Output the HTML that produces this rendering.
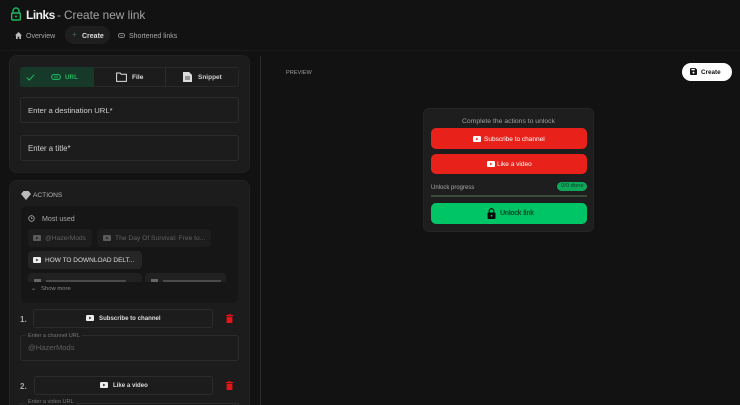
<!DOCTYPE html>
<html><head><meta charset="utf-8">
<style>
html,body{margin:0;padding:0;background:#121212;width:740px;height:405px;overflow:hidden}
body{font-family:"Liberation Sans",sans-serif;color:#ddd}
#w{position:absolute;left:0;top:0;width:740px;height:405px;overflow:hidden;background:#121212}
.a{position:absolute;box-sizing:border-box}
.t{position:absolute;white-space:nowrap;line-height:1;margin-top:1.5px}
svg{position:absolute;display:block}
.card{background:#1c1c1c;border:1px solid #222;border-radius:8px}
.inp{border:1px solid #2c2c2c;border-radius:3px}
.chip{position:absolute;height:18px;border-radius:4px;background:#212121}
</style></head><body><div id="w">
<!-- header -->
<svg style="left:10px;top:7px" width="12" height="14" viewBox="0 0 12 14"><path d="M3 6V4a3 3 0 0 1 6 0v2" fill="none" stroke="#1fb860" stroke-width="1.4"/><rect x="1.7" y="6" width="8.6" height="7" rx="1" fill="none" stroke="#1fb860" stroke-width="1.4"/><circle cx="6" cy="9.5" r="1" fill="#1fb860"/></svg>
<div class="t" style="left:26px;top:7.5px;font-size:12px;font-weight:bold;color:#eee;letter-spacing:-.5px">Links</div>
<div class="t" style="left:57px;top:8px;font-size:11.8px;color:#a3a3a3">-</div>
<div class="t" style="left:64px;top:8px;font-size:11.8px;color:#a3a3a3">Create new link</div>
<svg style="left:15px;top:32px" width="7" height="7" viewBox="0 0 7 7"><path d="M3.5 0L7 3.4H6V7H4.3V4.8H2.7V7H1V3.4H0z" fill="#bbb"/></svg>
<div class="t" style="left:26px;top:31px;font-size:7px;color:#a8a8a8">Overview</div>
<div class="a" style="left:65px;top:26px;width:45px;height:18px;border-radius:9px;background:#1e1e1e"></div>
<div class="t" style="left:72px;top:29px;font-size:8px;color:#476b57">+</div>
<div class="t" style="left:82px;top:31px;font-size:7px;font-weight:bold;color:#ddd">Create</div>
<svg style="left:118px;top:33px" width="7" height="5" viewBox="0 0 7 5"><rect x=".5" y=".5" width="6" height="4" rx="2" fill="none" stroke="#aaa" stroke-width=".8"/><path d="M2.5 2.5h2" stroke="#aaa" stroke-width=".7"/></svg>
<div class="t" style="left:129px;top:31px;font-size:7px;color:#a8a8a8">Shortened links</div>
<div class="a" style="left:0;top:50px;width:740px;height:1px;background:#191919"></div>
<div class="a" style="left:260px;top:56px;width:1px;height:349px;background:#2a2a2a"></div>

<!-- card 1 -->
<div class="a card" style="left:9px;top:55px;width:241px;height:118px"></div>
<div class="a" style="left:20px;top:67px;width:219px;height:20px;border:1px solid #282828;border-radius:3px"></div>
<div class="a" style="left:20px;top:67px;width:74px;height:20px;background:#17392a;border-radius:3px 0 0 3px"></div>
<div class="a" style="left:165px;top:67px;width:1px;height:20px;background:#2c2c2c"></div>
<svg style="left:26px;top:74px" width="9" height="7" viewBox="0 0 9 7"><path d="M.8 3.6L3.2 6 8.2.8" fill="none" stroke="#1fb860" stroke-width="1"/></svg>
<svg style="left:51px;top:74px" width="10" height="6" viewBox="0 0 10 6"><rect x=".6" y=".6" width="8.8" height="4.8" rx="2.4" fill="none" stroke="#1fb860" stroke-width="1.1"/><path d="M3 3h4" stroke="#1fb860" stroke-width="1"/></svg>
<div class="t" style="left:65px;top:73px;font-size:6.3px;font-weight:bold;color:#1fb860">URL</div>
<svg style="left:116px;top:72px" width="11" height="10" viewBox="0 0 11 10"><path d="M.6 1h3.5l1 1.2h5.3v7.2H.6z" fill="none" stroke="#e0e0e0" stroke-width="1"/></svg>
<div class="t" style="left:132px;top:73px;font-size:6.6px;font-weight:bold;color:#ddd">File</div>
<svg style="left:183px;top:72px" width="9" height="10" viewBox="0 0 9 10"><path d="M0 0h6l3 3v7H0z" fill="#ddd"/><path d="M2 5h5M2 7h5" stroke="#1c1c1c" stroke-width=".8"/></svg>
<div class="t" style="left:198px;top:73px;font-size:6.5px;font-weight:bold;color:#ccc">Snippet</div>
<div class="a inp" style="left:20px;top:97px;width:219px;height:26px"></div>
<div class="t" style="left:28px;top:105.5px;font-size:7.7px;color:#d0d0d0">Enter a destination URL*</div>
<div class="a inp" style="left:20px;top:135px;width:219px;height:26px"></div>
<div class="t" style="left:28px;top:143.5px;font-size:7.8px;color:#d0d0d0">Enter a title*</div>

<!-- card 2 -->
<div class="a card" style="left:9px;top:180px;width:241px;height:225px;border-bottom:0;border-radius:8px 8px 0 0"></div>
<svg style="left:21px;top:191px" width="10" height="9" viewBox="0 0 10 9"><path d="M2.5 0h5L10 3 5 9 0 3z" fill="#bbb"/></svg>
<div class="t" style="left:33px;top:191px;font-size:6.6px;color:#b4b4b4">ACTIONS</div>
<div class="a" style="left:21px;top:206px;width:217px;height:97px;background:#161616;border-radius:6px"></div>
<svg style="left:28px;top:215px" width="7" height="7" viewBox="0 0 7 7"><circle cx="3.5" cy="3.5" r="2.8" fill="none" stroke="#aaa" stroke-width=".8"/><path d="M3.5 2v1.7h1.3" fill="none" stroke="#aaa" stroke-width=".7"/></svg>
<div class="t" style="left:42px;top:214px;font-size:7.1px;color:#a8a8a8">Most used</div>

<div class="chip" style="left:28px;top:229px;width:64px;background:#1d1d1d"></div>
<svg style="left:33px;top:235px" width="8" height="6" viewBox="0 0 8 6"><rect width="8" height="6" rx="1.3" fill="#5c5c5c"/><path d="M3.2 1.6L5.4 3 3.2 4.4z" fill="#1d1d1d"/></svg>
<div class="t" style="left:45px;top:234px;font-size:6.7px;color:#606060">@HazerMods</div>
<div class="chip" style="left:97px;top:229px;width:114px;background:#1d1d1d"></div>
<svg style="left:103px;top:235px" width="8" height="6" viewBox="0 0 8 6"><rect width="8" height="6" rx="1.3" fill="#5c5c5c"/><path d="M3.2 1.6L5.4 3 3.2 4.4z" fill="#1d1d1d"/></svg>
<div class="t" style="left:115px;top:234px;font-size:6.7px;color:#606060">The Day Of Survival: Free to...</div>
<div class="chip" style="left:28px;top:251px;width:114px;background:#262626"></div>
<svg style="left:33px;top:257px" width="8" height="6" viewBox="0 0 8 6"><rect width="8" height="6" rx="1.3" fill="#eee"/><path d="M3.2 1.6L5.4 3 3.2 4.4z" fill="#262626"/></svg>
<div class="t" style="left:45px;top:256px;font-size:6.5px;color:#ddd">HOW TO DOWNLOAD DELT...</div>
<div class="a" style="left:28px;top:273px;width:114px;height:9px;background:#212121;border-radius:4px 4px 0 0"></div>
<div class="a" style="left:145px;top:273px;width:81px;height:9px;background:#212121;border-radius:4px 4px 0 0"></div>
<div class="a" style="left:34px;top:279px;width:7px;height:3px;background:#666"></div>
<div class="a" style="left:151px;top:279px;width:7px;height:3px;background:#666"></div>
<div class="a" style="left:46px;top:280px;width:80px;height:2px;background:#4a4a4a"></div>
<div class="a" style="left:163px;top:280px;width:58px;height:2px;background:#4a4a4a"></div>
<div class="t" style="left:31px;top:284px;font-size:6px;color:#999">⌄</div>
<div class="t" style="left:41px;top:285px;font-size:5.9px;color:#888">Show more</div>

<div class="t" style="left:20px;top:314px;font-size:8px;font-weight:bold;color:#aaa">1.</div>
<div class="a inp" style="left:33px;top:309px;width:180px;height:19px"></div>
<svg style="left:86px;top:315px" width="8" height="6" viewBox="0 0 8 6"><rect width="8" height="6" rx="1.3" fill="#eee"/><path d="M3.2 1.6L5.4 3 3.2 4.4z" fill="#1c1c1c"/></svg>
<div class="t" style="left:99px;top:314.5px;font-size:6.1px;font-weight:bold;color:#ddd">Subscribe to channel</div>
<svg style="left:226px;top:314px" width="7" height="9" viewBox="0 0 7 9"><path d="M0 1h2.2V.2h2.6V1H7v1H0zM.6 2.6h5.8V9H.6z" fill="#e5141a"/></svg>
<div class="a inp" style="left:20px;top:335px;width:219px;height:26px"></div>
<div class="a" style="left:26px;top:332px;width:56px;height:6px;background:#1c1c1c"></div>
<div class="t" style="left:28px;top:332px;font-size:5.6px;color:#777">Enter a channel URL</div>
<div class="t" style="left:28px;top:342.5px;font-size:7.6px;color:#5f5f5f">@HazerMods</div>

<div class="t" style="left:20px;top:381px;font-size:8px;font-weight:bold;color:#aaa">2.</div>
<div class="a inp" style="left:34px;top:376px;width:179px;height:19px"></div>
<svg style="left:100px;top:382px" width="8" height="6" viewBox="0 0 8 6"><rect width="8" height="6" rx="1.3" fill="#eee"/><path d="M3.2 1.6L5.4 3 3.2 4.4z" fill="#1c1c1c"/></svg>
<div class="t" style="left:113px;top:381.5px;font-size:6.1px;font-weight:bold;color:#ddd">Like a video</div>
<svg style="left:226px;top:381px" width="7" height="9" viewBox="0 0 7 9"><path d="M0 1h2.2V.2h2.6V1H7v1H0zM.6 2.6h5.8V9H.6z" fill="#e5141a"/></svg>
<div class="a" style="left:20px;top:403px;width:219px;height:2px;border:1px solid #2c2c2c;border-bottom:0;border-radius:3px 3px 0 0"></div>
<div class="a" style="left:26px;top:399px;width:50px;height:6px;background:#1c1c1c"></div>
<div class="t" style="left:28px;top:398px;font-size:5.6px;color:#777">Enter a video URL</div>

<!-- right -->
<div class="t" style="left:286px;top:69px;font-size:5.6px;color:#9a9a9a">PREVIEW</div>
<div class="a" style="left:682px;top:63px;width:50px;height:18px;border-radius:9px;background:#fff"></div>
<svg style="left:690px;top:68px" width="7" height="7" viewBox="0 0 7 7"><path d="M0 1a1 1 0 0 1 1-1h4.4L7 1.6V6a1 1 0 0 1-1 1H1a1 1 0 0 1-1-1z" fill="#111"/><rect x="1.4" y=".9" width="3.4" height="1.4" fill="#fff"/><circle cx="3.5" cy="4.6" r="1" fill="#fff"/></svg>
<div class="t" style="left:701px;top:68.5px;font-size:6.3px;font-weight:bold;color:#111">Create</div>

<div class="a" style="left:423px;top:108px;width:171px;height:124px;background:#1e1e1e;border:1px solid #252525;border-radius:6px"></div>
<div class="t" style="left:462px;top:117px;font-size:6.8px;color:#9f9f9f">Complete the actions to unlock</div>
<div class="a" style="left:431px;top:128px;width:156px;height:21px;border-radius:5px;background:#e8221b"></div>
<svg style="left:473px;top:136px" width="8" height="6" viewBox="0 0 8 6"><rect width="8" height="6" rx="1.3" fill="#fff"/><path d="M3.2 1.6L5.4 3 3.2 4.4z" fill="#e8221b"/></svg>
<div class="t" style="left:484px;top:135px;font-size:6.5px;color:#fff">Subscribe to channel</div>
<div class="a" style="left:431px;top:154px;width:156px;height:20px;border-radius:5px;background:#e8221b"></div>
<svg style="left:487px;top:161px" width="8" height="6" viewBox="0 0 8 6"><rect width="8" height="6" rx="1.3" fill="#fff"/><path d="M3.2 1.6L5.4 3 3.2 4.4z" fill="#e8221b"/></svg>
<div class="t" style="left:497px;top:160.5px;font-size:6.5px;color:#fff">Like a video</div>
<div class="t" style="left:431px;top:183px;font-size:6px;color:#a8a8a8">Unlock progress</div>
<div class="a" style="left:557px;top:182px;width:30px;height:9px;border-radius:5px;background:#0fa85a"></div>
<div class="t" style="left:561px;top:182.5px;font-size:5.8px;color:#0b3a22">0/0 done</div>
<div class="a" style="left:431px;top:195px;width:156px;height:2px;background:#3a4a3f"></div>
<div class="a" style="left:431px;top:203px;width:156px;height:21px;border-radius:5px;background:#00c566"></div>
<svg style="left:487px;top:208px" width="9" height="11" viewBox="0 0 9 11"><path d="M2.2 5V3a2.3 2.3 0 0 1 4.6 0v2" fill="none" stroke="#0a0a0a" stroke-width="1.1"/><rect x=".5" y="4.5" width="8" height="6.5" rx="1" fill="#0a0a0a"/><circle cx="4.5" cy="7.7" r=".9" fill="#00c566"/></svg>
<div class="t" style="left:500px;top:208.5px;font-size:7px;color:#0a3a20;-webkit-text-stroke:.2px #0a3a20">Unlock link</div>
</div></body></html>
